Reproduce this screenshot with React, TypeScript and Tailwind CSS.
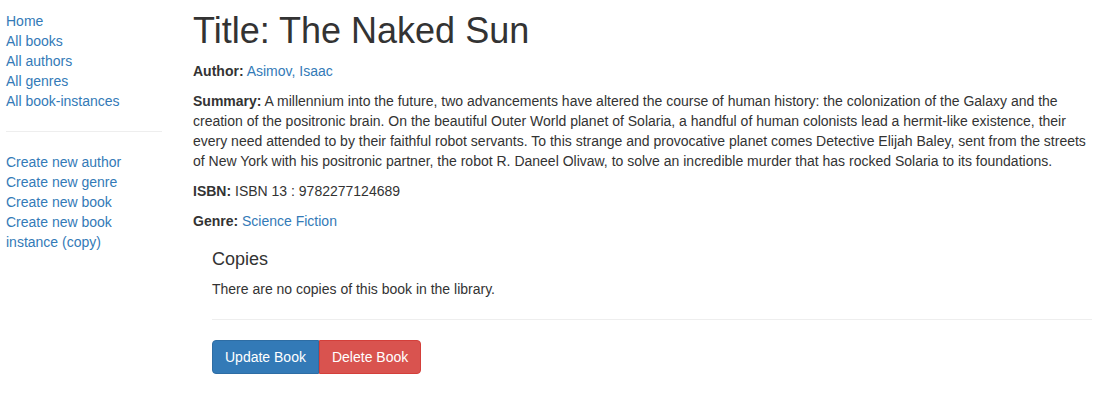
import React from 'react';

const sideTop = ['Home', 'All books', 'All authors', 'All genres', 'All book-instances'];
const sideBottom = ['Create new author', 'Create new genre', 'Create new book', 'Create new book instance (copy)'];

const summary =
  'A millennium into the future, two advancements have altered the course of human history: the colonization of the Galaxy and the creation of the positronic brain. On the beautiful Outer World planet of Solaria, a handful of human colonists lead a hermit-like existence, their every need attended to by their faithful robot servants. To this strange and provocative planet comes Detective Elijah Baley, sent from the streets of New York with his positronic partner, the robot R. Daneel Olivaw, to solve an incredible murder that has rocked Solaria to its foundations.';

const Sidebar: React.FC = () => (
  <div className="w-[162px] shrink-0 pl-[6px]">
    <ul>
      {sideTop.map(l => (
        <li key={l}>
          <a href="#" className="text-[#337ab7]">{l}</a>
        </li>
      ))}
    </ul>
    <hr className="my-[20px] border-t border-[#eee]" />
    <ul>
      {sideBottom.map(l => (
        <li key={l}>
          <a href="#" className="text-[#337ab7]">{l}</a>
        </li>
      ))}
    </ul>
  </div>
);

export default function App() {
  return (
    <div className="flex bg-white pt-[11px] font-['Liberation_Sans',Arial,sans-serif] text-[14px] leading-[20px] text-[#333]">
      <Sidebar />
      <div className="ml-[31px] w-[899px]">
        <h1 className="mb-[10px] text-[36px] leading-[39.6px] font-normal">Title: The Naked Sun</h1>
        <p className="mb-[10px]">
          <strong>Author:</strong> <a href="#" className="text-[#337ab7]">Asimov, Isaac</a>
        </p>
        <p className="mb-[10px]">
          <strong>Summary:</strong> {summary}
        </p>
        <p className="mb-[10px]">
          <strong>ISBN:</strong> ISBN 13 : 9782277124689
        </p>
        <p className="mb-[10px]">
          <strong>Genre:</strong> <a href="#" className="text-[#337ab7]">Science Fiction</a>
        </p>

        <div className="ml-[19px] mt-[19px]">
          <h4 className="mb-[10px] text-[18px] leading-[19.8px] font-normal">Copies</h4>
          <p>There are no copies of this book in the library.</p>
          <hr className="mt-[20px] mb-[20px] border-t border-[#eee]" />
          <div className="flex">
            <button className="rounded-l-[4px] border border-[#2e6da4] bg-[#337ab7] px-[12px] py-[6px] text-white">
              Update Book
            </button>
            <button className="rounded-r-[4px] border border-[#d43f3a] bg-[#d9534f] px-[12px] py-[6px] text-white">
              Delete Book
            </button>
          </div>
        </div>
      </div>
    </div>
  );
}
